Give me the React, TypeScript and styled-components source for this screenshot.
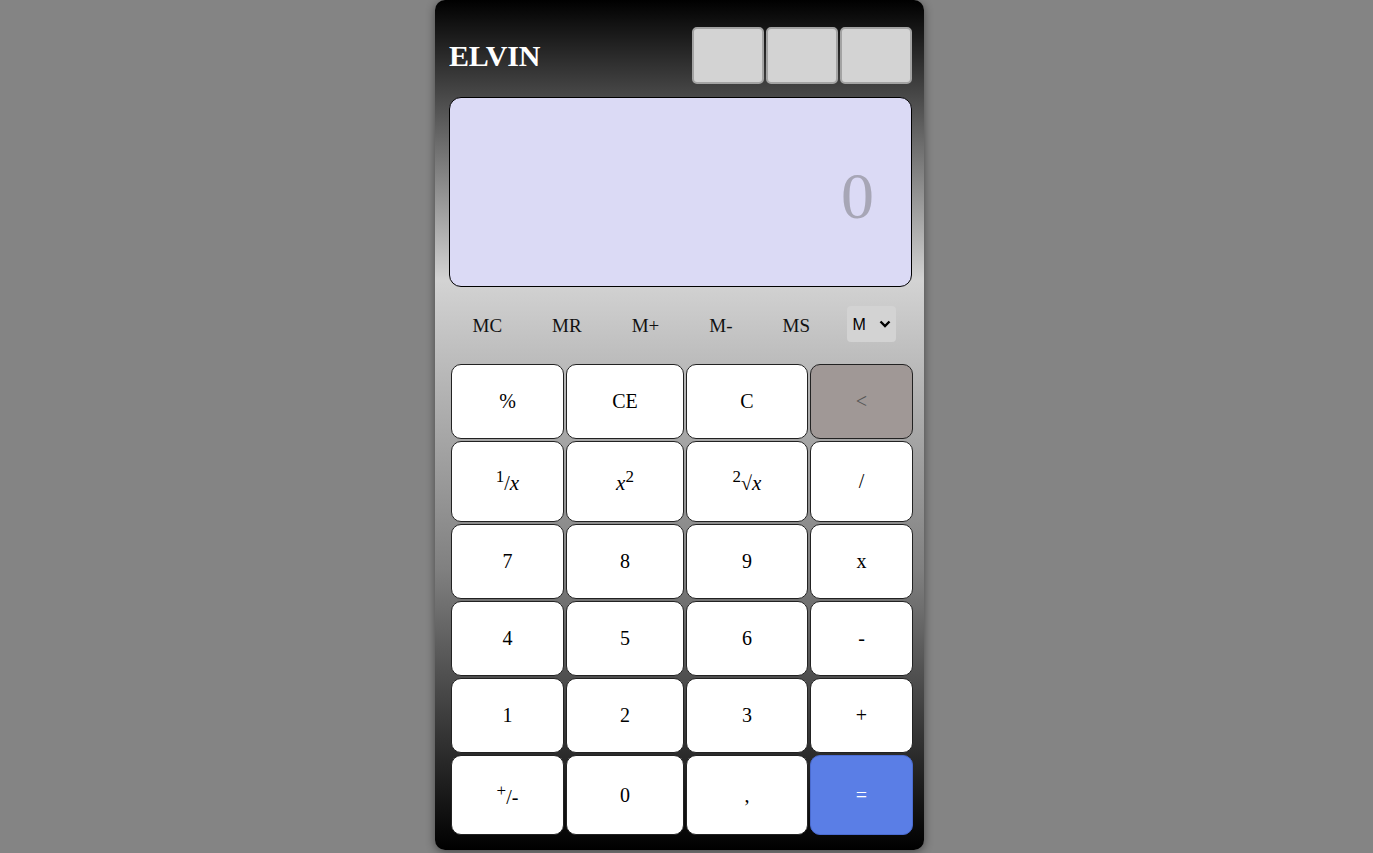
import React from 'react';
import styled, { createGlobalStyle } from 'styled-components';

const GlobalStyle = createGlobalStyle`
  html, body {
    margin: 0;
    padding: 0;
    background: #848484;
    font-family: 'Liberation Serif', 'Times New Roman', serif;
  }
`;

const Page = styled.div`
  display: flex;
  justify-content: center;
  padding-right: 14px;
  min-height: 853px;
  box-sizing: border-box;
`;

const Calculator = styled.div`
  width: 489px;
  box-sizing: border-box;
  padding: 27px 12px 15px 14px;
  border-radius: 10px;
  background: linear-gradient(#000 0%, #d3d3d3 33%, #808080 67%, #000 100%);
  box-shadow: 0 2px 10px rgba(0, 0, 0, 0.45);
  display: flex;
  flex-direction: column;
  align-self: flex-start;
`;

const Header = styled.div`
  display: flex;
  align-items: center;
  justify-content: space-between;
  height: 57px;
`;

const Brand = styled.h1`
  margin: 0;
  color: #fff;
  font-size: 30px;
  font-weight: bold;
  letter-spacing: -0.2px;
`;

const Tabs = styled.div`
  display: flex;
  gap: 2px;
`;

const TabBox = styled.button`
  width: 72px;
  height: 57px;
  box-sizing: border-box;
  background: #d3d3d3;
  border: 2px solid #a3a3a3;
  border-radius: 5px;
  padding: 0;
`;

const Display = styled.div`
  margin-top: 13px;
  height: 190px;
  box-sizing: border-box;
  border: 1px solid #000;
  border-radius: 12px;
  background: #dbdaf5;
  display: flex;
  align-items: center;
  justify-content: flex-end;
  padding: 8px 37px 0 0;
  color: #a7a6b6;
  font-size: 66px;
`;

const MemoryRow = styled.div`
  margin-top: 19px;
  height: 36px;
  display: flex;
  align-items: center;
  gap: 25px;
  padding-left: 11px;
`;

const MemButton = styled.button`
  background: transparent;
  border: none;
  padding: 3px 12.5px 0;
  font-family: inherit;
  font-size: 19px;
  color: #111;
  height: 36px;
`;

const SelectWrap = styled.div`
  position: relative;
  width: 49px;
  height: 36px;
`;

const MemSelect = styled.select`
  appearance: none;
  width: 49px;
  height: 36px;
  background: #d3d3d3;
  border: none;
  border-radius: 4px;
  font-family: 'Liberation Sans', Arial, sans-serif;
  font-size: 16px;
  color: #000;
  padding: 0 0 0 5px;
`;

const Chevron = styled.svg`
  position: absolute;
  right: 5px;
  top: 14px;
  width: 12px;
  height: 9px;
  pointer-events: none;
`;

const Keys = styled.div`
  margin-top: 22px;
  margin-left: 2px;
  display: grid;
  grid-template-columns: 113px 118px 122px 103px;
  grid-template-rows: 75px 81px 75px 75px 75px 80px;
  gap: 2px;
`;

const Key = styled.button<{ $variant?: 'back' | 'equals' }>`
  box-sizing: border-box;
  border: 1px solid #222;
  border-radius: 10px;
  font-family: 'Liberation Serif', 'Times New Roman', serif;
  font-size: 20px;
  padding: 0;
  background: ${({ $variant }) =>
    $variant === 'back' ? '#a09896' : $variant === 'equals' ? '#5a7ee6' : '#fff'};
  color: ${({ $variant }) =>
    $variant === 'back' ? '#555' : $variant === 'equals' ? '#fff' : '#000'};
  border-color: ${({ $variant }) => ($variant === 'equals' ? '#4a6bd0' : '#222')};

  sup {
    font-size: 17px;
  }

  i {
    font-size: 21px;
  }
`;

const keys: { label: React.ReactNode; variant?: 'back' | 'equals' }[] = [
  { label: '%' },
  { label: 'CE' },
  { label: 'C' },
  { label: '<', variant: 'back' },
  { label: <><sup>1</sup>/<i>x</i></> },
  { label: <><i>x</i><sup>2</sup></> },
  { label: <><sup>2</sup>√<i>x</i></> },
  { label: '/' },
  { label: '7' },
  { label: '8' },
  { label: '9' },
  { label: 'x' },
  { label: '4' },
  { label: '5' },
  { label: '6' },
  { label: '-' },
  { label: '1' },
  { label: '2' },
  { label: '3' },
  { label: '+' },
  { label: <><sup>+</sup>/-</> },
  { label: '0' },
  { label: ',' },
  { label: '=', variant: 'equals' },
];

const memory = ['MC', 'MR', 'M+', 'M-', 'MS'];

export default function App() {
  return (
    <>
      <GlobalStyle />
      <Page>
        <Calculator>
          <Header>
            <Brand>ELVIN</Brand>
            <Tabs>
              <TabBox />
              <TabBox />
              <TabBox />
            </Tabs>
          </Header>
          <Display>0</Display>
          <MemoryRow>
            {memory.map(m => (
              <MemButton key={m}>{m}</MemButton>
            ))}
            <SelectWrap>
              <MemSelect defaultValue="M">
                <option value="M">M</option>
              </MemSelect>
              <Chevron viewBox="0 0 12 9">
                <path d="M1.5 1.5 L6 6 L10.5 1.5" fill="none" stroke="#000" strokeWidth="2.4" />
              </Chevron>
            </SelectWrap>
          </MemoryRow>
          <Keys>
            {keys.map((k, i) => (
              <Key key={i} $variant={k.variant}>
                {k.label}
              </Key>
            ))}
          </Keys>
        </Calculator>
      </Page>
    </>
  );
}
